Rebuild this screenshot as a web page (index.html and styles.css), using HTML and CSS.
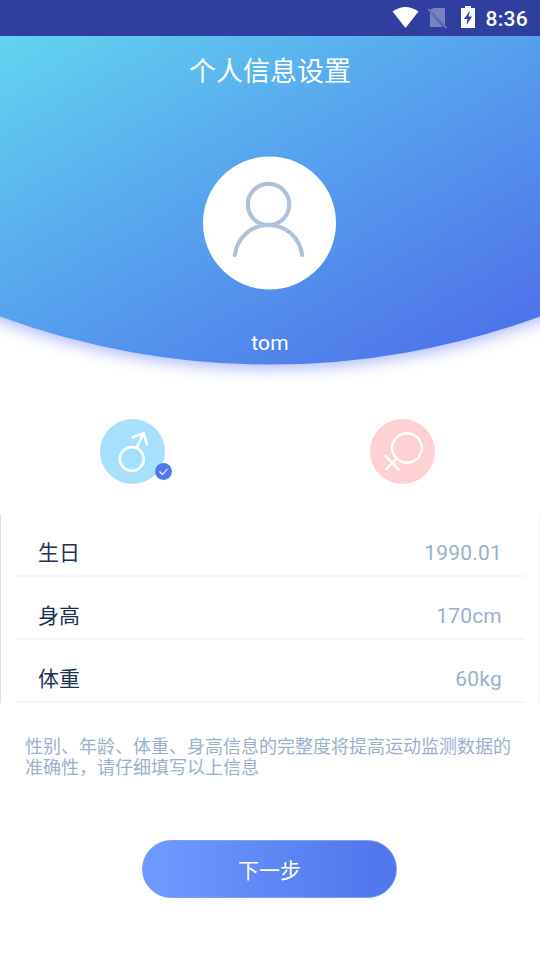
FILE: index.html
```html
<!DOCTYPE html>
<html lang="zh-CN">
<head>
<meta charset="utf-8">
<title>个人信息设置</title>
<link rel="stylesheet" href="styles.css">
</head>
<body>
<div class="status">
  <svg class="status-icons" width="86" height="24" viewBox="0 0 86 24">
    <path d="M.5 5.500Q13.500-3.500 26.500 5.500L13.500 22Z" transform="translate(0 1)" fill="#fff"/>
    <path d="M42 3H53V20L38 4.500ZM38 7.500L51 22H38Z" fill="#7782bf"/>
    <path d="M36 4L54.500 23" stroke="#7782bf" stroke-width="1.500"/>
    <path d="M69 3H73V1H79V3H83V23H69Z" fill="#fff"/>
    <path d="M78 5.500L72 14H75.500L74.500 20L80 11.500H76.500Z" fill="#303f9f"/>
  </svg>
  <span class="clock">8:36</span>
</div>
<header class="hero">
  <svg class="hero-bg" width="540" height="360" viewBox="0 0 540 360">
    <defs>
      <linearGradient id="sky" gradientUnits="userSpaceOnUse" x1="0" y1="0" x2="250" y2="430">
        <stop offset="0" stop-color="#62d4f0"/>
        <stop offset=".5" stop-color="#57a3ee"/>
        <stop offset="1" stop-color="#4f75ea"/>
      </linearGradient>
      <filter id="soft" x="-20%" y="-20%" width="140%" height="140%"><feGaussianBlur stdDeviation="8"/></filter>
    </defs>
    <path d="M-30 0H570V268L540 280A783 783 0 0 1 0 280L-30 268Z" transform="translate(0 4)" fill="#6d83f3" opacity=".6" filter="url(#soft)"/>
    <path d="M0 0H540V280.500A783 783 0 0 1 0 280.500Z" fill="url(#sky)"/>
  </svg>
  <h1 class="title">个人信息设置</h1>
  <svg class="avatar" width="134" height="134" viewBox="0 0 134 134">
    <circle cx="67.500" cy="67" r="66.500" fill="#fff"/>
    <g fill="none" stroke="#b0c1da" stroke-width="4.200" stroke-linecap="round">
      <circle cx="66.500" cy="48.500" r="20.700"/>
      <path d="M32.800 99C35.500 81 49.500 69 66.500 69S97.500 81 100.200 99"/>
    </g>
  </svg>
  <div class="name">tom</div>
</header>
<main>
  <div class="genders">
    <div class="gender">
      <svg width="74" height="66" viewBox="0 0 74 66">
        <circle cx="32.500" cy="32.500" r="32.500" fill="#a7e0ff"/>
        <g fill="none" stroke="#fff" stroke-width="2.600" stroke-linecap="round" stroke-linejoin="round">
          <circle cx="31.800" cy="40" r="11.900"/>
          <path d="M36.800 28.500L43.600 14.200M32.800 18.200L43.600 14.200L46.800 25"/>
        </g>
        <circle cx="63.500" cy="52.500" r="8.500" fill="#5078ec"/>
        <path d="M59.500 52.500L62.500 55.500L67.500 50" fill="none" stroke="#fff" stroke-width="1.100"/>
      </svg>
    </div>
    <div class="gender">
      <svg width="66" height="66" viewBox="0 0 66 66">
        <circle cx="32.500" cy="32.500" r="32.500" fill="#ffd1d5"/>
        <g fill="none" stroke="#fff" stroke-width="2.500" stroke-linecap="round">
          <circle cx="37" cy="29" r="14.800"/>
          <path d="M26.500 39.500L16 50.500M15.300 37L29.300 51"/>
        </g>
      </svg>
    </div>
  </div>
  <section class="details">
    <div class="row"><span class="label">生日</span><span class="value">1990.01</span></div>
    <div class="row"><span class="label">身高</span><span class="value">170cm</span></div>
    <div class="row"><span class="label">体重</span><span class="value">60kg</span></div>
  </section>
  <p class="note">性别、年龄、体重、身高信息的完整度将提高运动监测数据的准确性，请仔细填写以上信息</p>
  <button class="next">下一步</button>
</main>
</body>
</html>
```
FILE: styles.css
```css
* { box-sizing: border-box; }
body {
  margin: 0;
  width: 540px;
  height: 960px;
  overflow: hidden;
  background: #fff;
  font-family: Roboto, "Noto Sans CJK SC", sans-serif;
}
svg { display: block; }
.status {
  height: 36px;
  display: flex;
  justify-content: flex-end;
  padding: 5px 12px 0 0;
  background: #303f9f;
  color: #fff;
}
.status-icons { margin-right: 7px; }
.clock { font-size: 21px; line-height: 28px; font-weight: 500; letter-spacing: .3px; }
.hero {
  position: relative;
  height: 344px;
  display: flex;
  flex-direction: column;
  align-items: center;
  color: #fff;
}
.hero-bg { position: absolute; inset: 0; }
.title {
  position: relative;
  margin: 16px 0 0;
  font-size: 27px;
  line-height: 40px;
  font-weight: 400;
}
.avatar { position: relative; margin: 64px 2px 0 0; }
.name {
  position: relative;
  margin-top: 40px;
  font-size: 21px;
  line-height: 26px;
  letter-spacing: .1px;
}
.genders {
  display: grid;
  grid-template-columns: 270px 270px;
  height: 134px;
  padding-top: 39px;
}
.gender { padding-left: 100px; }
.details {
  height: 189px;
  padding: 0 14px 0 15px;
  border-left: 1px solid #d5defb;
  border-right: 1px solid #f1f5fd;
}
.row {
  height: 63px;
  padding: 15px 23px 0 22px;
  display: flex;
  justify-content: space-between;
  border-bottom: 2px solid #f2f6fd;
  font-size: 21px;
  line-height: 48px;
}
.label { color: #1d3157; }
.value { color: #9bafd0; letter-spacing: .2px; }
.note {
  margin: 33px 25px 0;
  width: 490px;
  font-size: 18px;
  line-height: 21px;
  color: #9bafd0;
}
.next {
  display: block;
  width: 255px;
  height: 58px;
  margin: 62px 0 0 142px;
  padding: 0 0 1px;
  border: 1px solid #7fa0f8;
  border-radius: 29px;
  background: linear-gradient(90deg, #6c98ff 10%, #4f76ec 95%) border-box;
  color: #fff;
  font: 400 21px "Noto Sans CJK SC", sans-serif;
}
```
